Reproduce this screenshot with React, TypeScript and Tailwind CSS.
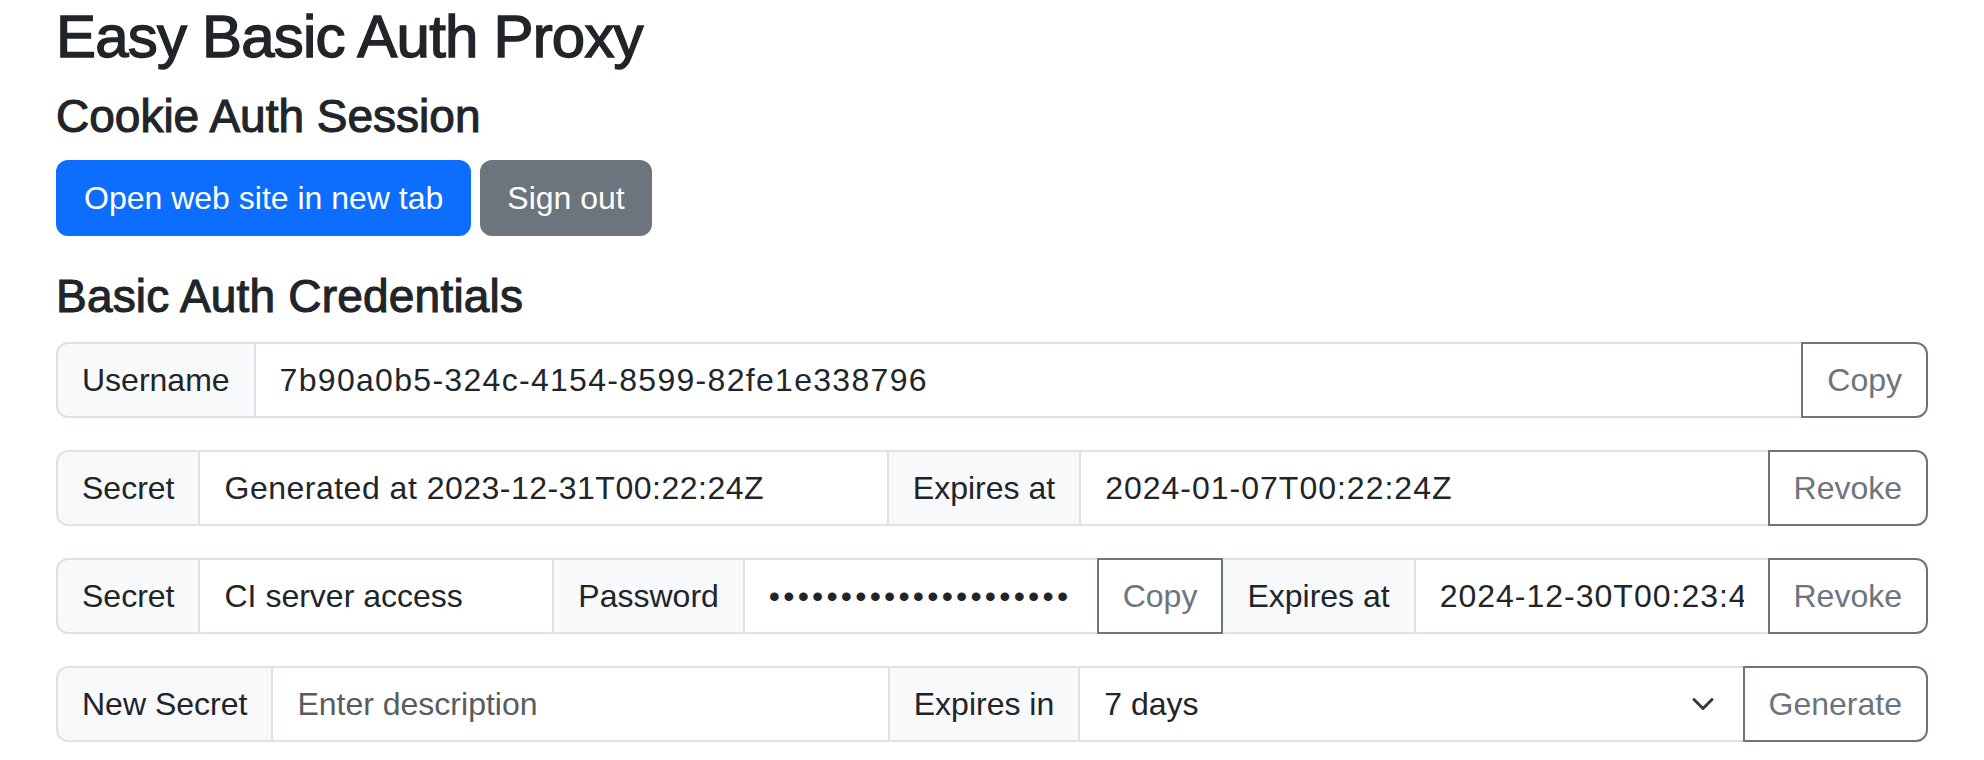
const label =
  "flex items-center whitespace-nowrap border-2 border-[#dee2e6] bg-[#f8f9fa] px-[24px] py-[12px] text-[32px] leading-[48px] text-[#212529]";
const field =
  "min-w-0 flex-1 -ml-[2px] border-2 border-[#dee2e6] bg-white px-[24px] py-[12px] text-[32px] leading-[48px] text-[#212529] outline-none";
const btn =
  "relative z-[2] -ml-[2px] whitespace-nowrap border-2 border-[#6c757d] bg-white px-[24px] py-[12px] text-[32px] leading-[48px] text-[#6c757d]";

export default function App() {
  return (
    <div className="min-h-screen bg-white px-[56px] font-['Liberation_Sans',Arial,sans-serif] text-[#212529]">
      <h1 className="text-[60px] leading-[73px] tracking-[-0.8px] [-webkit-text-stroke:1.4px_#212529]">
        Easy Basic Auth Proxy
      </h1>

      <h4 className="mt-[16px] text-[46px] leading-[55px] [-webkit-text-stroke:1.1px_#212529]">Cookie Auth Session</h4>
      <div className="mt-[16px] flex gap-[9px]">
        <button className="rounded-[12px] border-2 border-[#0d6efd] bg-[#0d6efd] px-[26px] py-[12px] text-[32px] leading-[48px] text-white">
          Open web site in new tab
        </button>
        <button className="rounded-[12px] border-2 border-[#6c757d] bg-[#6c757d] px-[25px] py-[12px] text-[32px] leading-[48px] text-white">
          Sign out
        </button>
      </div>

      <h4 className="mt-[33px] text-[46px] leading-[55px] tracking-[0.2px] [-webkit-text-stroke:1.1px_#212529]">Basic Auth Credentials</h4>

      <div className="mt-[18px] flex flex-col gap-[32px]">
        <div className="flex h-[76px]">
          <span className={`${label} rounded-l-[12px]`}>Username</span>
          <input className={`${field} tracking-[1.3px]`} readOnly value="7b90a0b5-324c-4154-8599-82fe1e338796" />
          <button className={`${btn} rounded-r-[12px]`}>Copy</button>
        </div>

        <div className="flex h-[76px]">
          <span className={`${label} rounded-l-[12px]`}>Secret</span>
          <input className={`${field} tracking-[0.5px]`} readOnly value="Generated at 2023-12-31T00:22:24Z" />
          <span className={`${label} -ml-[2px]`}>Expires at</span>
          <input className={`${field} tracking-[1px]`} readOnly value="2024-01-07T00:22:24Z" />
          <button className={`${btn} rounded-r-[12px]`}>Revoke</button>
        </div>

        <div className="flex h-[76px]">
          <span className={`${label} rounded-l-[12px]`}>Secret</span>
          <input className={field} readOnly value="CI server access" />
          <span className={`${label} -ml-[2px]`}>Password</span>
          <input className={`${field} tracking-[3.2px]`} type="password" readOnly value="abcdefghijklmnopqrstu" />
          <button className={btn}>Copy</button>
          <span className={`${label} -ml-[2px]`}>Expires at</span>
          <input className={`${field} tracking-[1px]`} readOnly value="2024-12-30T00:23:45Z" />
          <button className={`${btn} rounded-r-[12px]`}>Revoke</button>
        </div>

        <div className="flex h-[76px]">
          <span className={`${label} rounded-l-[12px]`}>New Secret</span>
          <input className={`${field} placeholder:text-[#595c5e]`} placeholder="Enter description" />
          <span className={`${label} -ml-[2px]`}>Expires in</span>
          <div className="relative -ml-[2px] flex min-w-0 flex-[1_1_100px]">
            <select
              defaultValue="7"
              className="w-full min-w-0 appearance-none border-2 border-[#dee2e6] bg-white py-[12px] pl-[24px] pr-[72px] text-[32px] leading-[48px] text-[#212529] outline-none"
            >
              <option value="1">1 day</option>
              <option value="7">7 days</option>
              <option value="30">30 days</option>
              <option value="365">365 days</option>
            </select>
            <svg
              className="pointer-events-none absolute right-[26px] top-1/2 -translate-y-1/2"
              width="32"
              height="24"
              viewBox="0 0 16 16"
              fill="none"
              stroke="#343a40"
              strokeWidth="2"
              strokeLinecap="round"
              strokeLinejoin="round"
            >
              <path d="m2 5 6 6 6-6" />
            </svg>
          </div>
          <button className={`${btn} rounded-r-[12px]`}>Generate</button>
        </div>
      </div>
    </div>
  );
}
